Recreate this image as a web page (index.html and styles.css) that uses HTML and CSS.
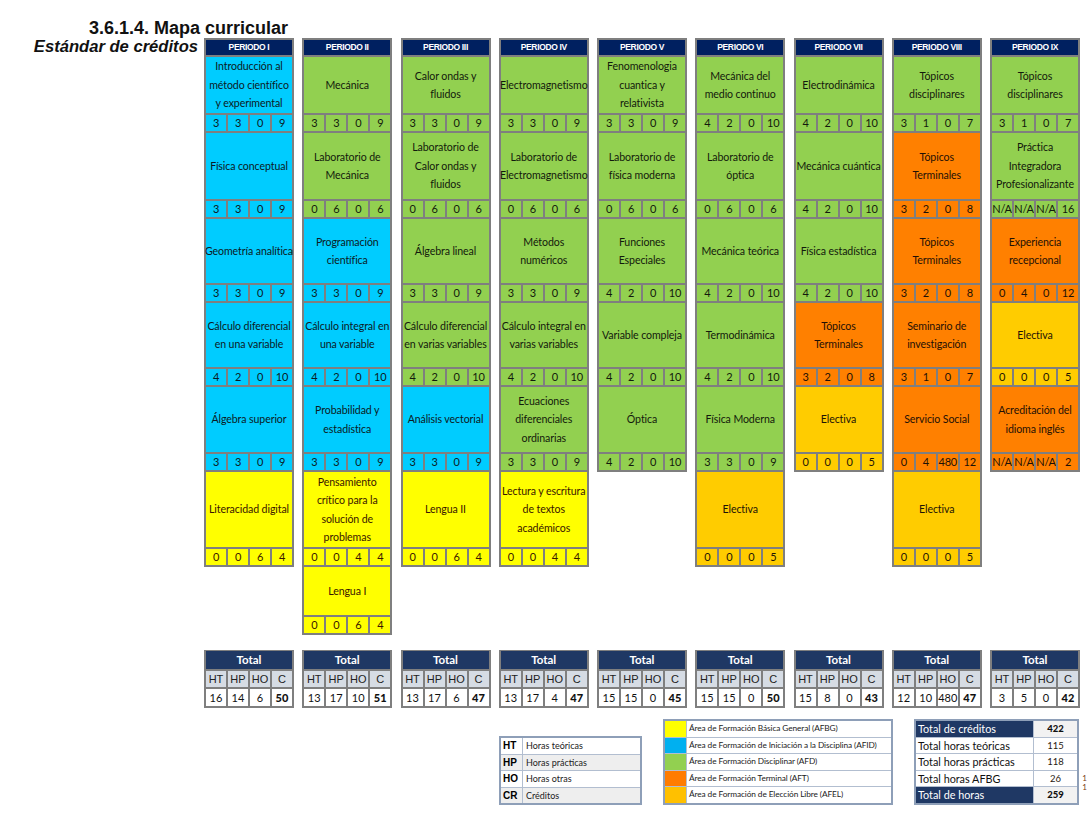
FILE: index.html
```html
<!DOCTYPE html>
<html lang="es">
<head>
<meta charset="utf-8">
<title>Mapa curricular</title>
<link rel="stylesheet" href="styles.css">
</head>
<body>
<div class="page">
  <h1 class="title">3.6.1.4. Mapa curricular</h1>
  <div class="main">
    <div class="side">Estándar de créditos</div>
    <div class="board">
      <div class="periods">
        <div class="col">
          <div class="ph">PERIODO I</div>
          <div class="c cy h1">Introducción al<br>método científico<br>y experimental</div>
          <div class="n cy"><span>3</span><span>3</span><span>0</span><span>9</span></div>
          <div class="c cy h2">Física conceptual</div>
          <div class="n cy"><span>3</span><span>3</span><span>0</span><span>9</span></div>
          <div class="c cy h3">Geometría analítica</div>
          <div class="n cy"><span>3</span><span>3</span><span>0</span><span>9</span></div>
          <div class="c cy h4">Cálculo diferencial<br>en una variable</div>
          <div class="n cy"><span>4</span><span>2</span><span>0</span><span>10</span></div>
          <div class="c cy h5">Álgebra superior</div>
          <div class="n cy"><span>3</span><span>3</span><span>0</span><span>9</span></div>
          <div class="c ye h6">Literacidad digital</div>
          <div class="n ye"><span>0</span><span>0</span><span>6</span><span>4</span></div>
        </div>
        <div class="col">
          <div class="ph">PERIODO II</div>
          <div class="c gr h1">Mecánica</div>
          <div class="n gr"><span>3</span><span>3</span><span>0</span><span>9</span></div>
          <div class="c gr h2">Laboratorio de<br>Mecánica</div>
          <div class="n gr"><span>0</span><span>6</span><span>0</span><span>6</span></div>
          <div class="c cy h3">Programación<br>científica</div>
          <div class="n cy"><span>3</span><span>3</span><span>0</span><span>9</span></div>
          <div class="c cy h4">Cálculo integral en<br>una variable</div>
          <div class="n cy"><span>4</span><span>2</span><span>0</span><span>10</span></div>
          <div class="c cy h5">Probabilidad y<br>estadística</div>
          <div class="n cy"><span>3</span><span>3</span><span>0</span><span>9</span></div>
          <div class="c ye h6">Pensamiento<br>crítico para la<br>solución de<br>problemas</div>
          <div class="n ye"><span>0</span><span>0</span><span>4</span><span>4</span></div>
          <div class="c ye h7">Lengua I</div>
          <div class="n ye"><span>0</span><span>0</span><span>6</span><span>4</span></div>
        </div>
        <div class="col">
          <div class="ph">PERIODO III</div>
          <div class="c gr h1">Calor ondas y<br>fluidos</div>
          <div class="n gr"><span>3</span><span>3</span><span>0</span><span>9</span></div>
          <div class="c gr h2">Laboratorio de<br>Calor ondas y<br>fluidos</div>
          <div class="n gr"><span>0</span><span>6</span><span>0</span><span>6</span></div>
          <div class="c gr h3">Álgebra lineal</div>
          <div class="n gr"><span>3</span><span>3</span><span>0</span><span>9</span></div>
          <div class="c gr h4">Cálculo diferencial<br>en varias variables</div>
          <div class="n gr"><span>4</span><span>2</span><span>0</span><span>10</span></div>
          <div class="c cy h5">Análisis vectorial</div>
          <div class="n cy"><span>3</span><span>3</span><span>0</span><span>9</span></div>
          <div class="c ye h6">Lengua II</div>
          <div class="n ye"><span>0</span><span>0</span><span>6</span><span>4</span></div>
        </div>
        <div class="col">
          <div class="ph">PERIODO IV</div>
          <div class="c gr h1">Electromagnetismo</div>
          <div class="n gr"><span>3</span><span>3</span><span>0</span><span>9</span></div>
          <div class="c gr h2">Laboratorio de<br>Electromagnetismo</div>
          <div class="n gr"><span>0</span><span>6</span><span>0</span><span>6</span></div>
          <div class="c gr h3">Métodos<br>numéricos</div>
          <div class="n gr"><span>3</span><span>3</span><span>0</span><span>9</span></div>
          <div class="c gr h4">Cálculo integral en<br>varias variables</div>
          <div class="n gr"><span>4</span><span>2</span><span>0</span><span>10</span></div>
          <div class="c gr h5">Ecuaciones<br>diferenciales<br>ordinarias</div>
          <div class="n gr"><span>3</span><span>3</span><span>0</span><span>9</span></div>
          <div class="c ye h6">Lectura y escritura<br>de textos<br>académicos</div>
          <div class="n ye"><span>0</span><span>0</span><span>4</span><span>4</span></div>
        </div>
        <div class="col">
          <div class="ph">PERIODO V</div>
          <div class="c gr h1">Fenomenologia<br>cuantica y<br>relativista</div>
          <div class="n gr"><span>3</span><span>3</span><span>0</span><span>9</span></div>
          <div class="c gr h2">Laboratorio de<br>física moderna</div>
          <div class="n gr"><span>0</span><span>6</span><span>0</span><span>6</span></div>
          <div class="c gr h3">Funciones<br>Especiales</div>
          <div class="n gr"><span>4</span><span>2</span><span>0</span><span>10</span></div>
          <div class="c gr h4">Variable compleja</div>
          <div class="n gr"><span>4</span><span>2</span><span>0</span><span>10</span></div>
          <div class="c gr h5">Óptica</div>
          <div class="n gr"><span>4</span><span>2</span><span>0</span><span>10</span></div>
        </div>
        <div class="col">
          <div class="ph">PERIODO VI</div>
          <div class="c gr h1">Mecánica del<br>medio continuo</div>
          <div class="n gr"><span>4</span><span>2</span><span>0</span><span>10</span></div>
          <div class="c gr h2">Laboratorio de<br>óptica</div>
          <div class="n gr"><span>0</span><span>6</span><span>0</span><span>6</span></div>
          <div class="c gr h3">Mecánica teórica</div>
          <div class="n gr"><span>4</span><span>2</span><span>0</span><span>10</span></div>
          <div class="c gr h4">Termodinámica</div>
          <div class="n gr"><span>4</span><span>2</span><span>0</span><span>10</span></div>
          <div class="c gr h5">Física Moderna</div>
          <div class="n gr"><span>3</span><span>3</span><span>0</span><span>9</span></div>
          <div class="c go h6">Electiva</div>
          <div class="n go"><span>0</span><span>0</span><span>0</span><span>5</span></div>
        </div>
        <div class="col">
          <div class="ph">PERIODO VII</div>
          <div class="c gr h1">Electrodinámica</div>
          <div class="n gr"><span>4</span><span>2</span><span>0</span><span>10</span></div>
          <div class="c gr h2">Mecánica cuántica</div>
          <div class="n gr"><span>4</span><span>2</span><span>0</span><span>10</span></div>
          <div class="c gr h3">Física estadística</div>
          <div class="n gr"><span>4</span><span>2</span><span>0</span><span>10</span></div>
          <div class="c or h4">Tópicos<br>Terminales</div>
          <div class="n or"><span>3</span><span>2</span><span>0</span><span>8</span></div>
          <div class="c go h5">Electiva</div>
          <div class="n go"><span>0</span><span>0</span><span>0</span><span>5</span></div>
        </div>
        <div class="col">
          <div class="ph">PERIODO VIII</div>
          <div class="c gr h1">Tópicos<br>disciplinares</div>
          <div class="n gr"><span>3</span><span>1</span><span>0</span><span>7</span></div>
          <div class="c or h2">Tópicos<br>Terminales</div>
          <div class="n or"><span>3</span><span>2</span><span>0</span><span>8</span></div>
          <div class="c or h3">Tópicos<br>Terminales</div>
          <div class="n or"><span>3</span><span>2</span><span>0</span><span>8</span></div>
          <div class="c or h4">Seminario de<br>investigación</div>
          <div class="n or"><span>3</span><span>1</span><span>0</span><span>7</span></div>
          <div class="c or h5">Servicio Social</div>
          <div class="n or"><span>0</span><span>4</span><span>480</span><span>12</span></div>
          <div class="c go h6">Electiva</div>
          <div class="n go"><span>0</span><span>0</span><span>0</span><span>5</span></div>
        </div>
        <div class="col">
          <div class="ph">PERIODO IX</div>
          <div class="c gr h1">Tópicos<br>disciplinares</div>
          <div class="n gr"><span>3</span><span>1</span><span>0</span><span>7</span></div>
          <div class="c gr h2">Práctica<br>Integradora<br>Profesionalizante</div>
          <div class="n gr"><span>N/A</span><span>N/A</span><span>N/A</span><span>16</span></div>
          <div class="c or h3">Experiencia<br>recepcional</div>
          <div class="n or"><span>0</span><span>4</span><span>0</span><span>12</span></div>
          <div class="c go h4">Electiva</div>
          <div class="n go"><span>0</span><span>0</span><span>0</span><span>5</span></div>
          <div class="c or h5">Acreditación del<br>idioma inglés</div>
          <div class="n or"><span>N/A</span><span>N/A</span><span>N/A</span><span>2</span></div>
        </div>
      </div>

      <div class="totals">
        <div class="tot"><div class="th">Total</div><div class="tl"><span>HT</span><span>HP</span><span>HO</span><span>C</span></div><div class="tv"><span>16</span><span>14</span><span>6</span><b>50</b></div></div>
        <div class="tot"><div class="th">Total</div><div class="tl"><span>HT</span><span>HP</span><span>HO</span><span>C</span></div><div class="tv"><span>13</span><span>17</span><span>10</span><b>51</b></div></div>
        <div class="tot"><div class="th">Total</div><div class="tl"><span>HT</span><span>HP</span><span>HO</span><span>C</span></div><div class="tv"><span>13</span><span>17</span><span>6</span><b>47</b></div></div>
        <div class="tot"><div class="th">Total</div><div class="tl"><span>HT</span><span>HP</span><span>HO</span><span>C</span></div><div class="tv"><span>13</span><span>17</span><span>4</span><b>47</b></div></div>
        <div class="tot"><div class="th">Total</div><div class="tl"><span>HT</span><span>HP</span><span>HO</span><span>C</span></div><div class="tv"><span>15</span><span>15</span><span>0</span><b>45</b></div></div>
        <div class="tot"><div class="th">Total</div><div class="tl"><span>HT</span><span>HP</span><span>HO</span><span>C</span></div><div class="tv"><span>15</span><span>15</span><span>0</span><b>50</b></div></div>
        <div class="tot"><div class="th">Total</div><div class="tl"><span>HT</span><span>HP</span><span>HO</span><span>C</span></div><div class="tv"><span>15</span><span>8</span><span>0</span><b>43</b></div></div>
        <div class="tot"><div class="th">Total</div><div class="tl"><span>HT</span><span>HP</span><span>HO</span><span>C</span></div><div class="tv"><span>12</span><span>10</span><span>480</span><b>47</b></div></div>
        <div class="tot"><div class="th">Total</div><div class="tl"><span>HT</span><span>HP</span><span>HO</span><span>C</span></div><div class="tv"><span>3</span><span>5</span><span>0</span><b>42</b></div></div>
      </div>
    </div>
  </div>

  <div class="legends">
    <div class="leg leg1">
      <div class="lr"><b>HT</b><span>Horas teóricas</span></div>
      <div class="lr alt"><b>HP</b><span>Horas prácticas</span></div>
      <div class="lr"><b>HO</b><span>Horas otras</span></div>
      <div class="lr alt"><b>CR</b><span>Créditos</span></div>
    </div>
    <div class="leg leg2">
      <div class="lr"><i class="s-ye"></i><span>Área de Formación Básica General (AFBG)</span></div>
      <div class="lr"><i class="s-cy"></i><span>Área de Formación de Iniciación a la Disciplina (AFID)</span></div>
      <div class="lr"><i class="s-gr"></i><span>Área de Formación Disciplinar (AFD)</span></div>
      <div class="lr"><i class="s-or"></i><span>Área de Formación Terminal (AFT)</span></div>
      <div class="lr"><i class="s-go"></i><span>Área de Formación de Elección Libre (AFEL)</span></div>
    </div>
    <div class="leg sum">
      <div class="lr dark"><span>Total de créditos</span><b>422</b></div>
      <div class="lr"><span>Total horas teóricas</span><em>115</em></div>
      <div class="lr"><span>Total horas prácticas</span><em>118</em></div>
      <div class="lr"><span>Total horas AFBG</span><em>26</em></div>
      <div class="lr dark"><span>Total de horas</span><b>259</b></div>
    </div>
    <div class="edge">1<br>1</div>
  </div>
</div>
</body>
</html>
```

FILE: styles.css
```css
:root {
  --gill: "Lato", "Liberation Sans", Arial, sans-serif;
  --grid: #7f7f7f;
  --navy: #002060;
  --navy2: #1f3864;
  --lborder: #8e9fb8;
  --lline: #b2bed0;
}

html, body {
  margin: 0;
  padding: 0;
  background: #ffffff;
  overflow: hidden;
}

body {
  font-family: "Liberation Sans", Arial, sans-serif;
  color: #111;
}

.page {
  width: 1088px;
}

.title {
  margin: 0;
  padding-top: 18px;
  width: 288px;
  height: 20px;
  text-align: right;
  font: bold 18px/20px "Liberation Sans", Arial, sans-serif;
  color: #111;
  white-space: nowrap;
}

.main {
  display: flex;
}

.side {
  width: 198px;
  margin-right: 6px;
  text-align: right;
  font: italic bold 16.6px/18px "Liberation Sans", Arial, sans-serif;
  color: #111;
  white-space: nowrap;
}

.board {
  width: 876px;
}

.periods,
.totals {
  display: grid;
  grid-template-columns: repeat(9, 90px);
  column-gap: 8.25px;
  align-items: start;
}

.col {
  background: var(--grid);
  padding: 2px;
  display: flex;
  flex-direction: column;
  gap: 2px;
}

.ph {
  height: 15px;
  background: var(--navy);
  color: #fff;
  font: bold 8.5px/15px "Liberation Sans", Arial, sans-serif;
  letter-spacing: -0.35px;
  text-align: center;
  white-space: nowrap;
}

.cy { --bg: #00ccff; --fg: #0c1a24; }
.gr { --bg: #92d050; --fg: #121a0c; }
.ye { --bg: #ffff00; --fg: #3a1600; }
.or { --bg: #ff8000; --fg: #1e1006; }
.go { --bg: #ffcc00; --fg: #1e1406; }

.c {
  display: flex;
  align-items: center;
  justify-content: center;
  text-align: center;
  background: var(--bg);
  color: var(--fg);
  font: 10.6px/18.5px var(--gill);
  letter-spacing: -0.1px;
  white-space: nowrap;
}

.h1 { height: 56px; }
.h2 { height: 66px; }
.h3 { height: 64px; }
.h4 { height: 64px; }
.h5 { height: 65px; }
.h6 { height: 75px; }
.h7 { height: 48px; }

.n {
  display: grid;
  grid-template-columns: repeat(4, 1fr);
  gap: 2px;
  height: 16px;
}

.n span {
  background: var(--bg);
  color: var(--fg);
  text-align: center;
  font: 11px/16px var(--gill);
  letter-spacing: -0.2px;
  white-space: nowrap;
  overflow: hidden;
}

.totals {
  margin-top: 15px;
}

.tot {
  background: var(--grid);
  padding: 1px 2px 2px;
  display: flex;
  flex-direction: column;
  gap: 2px;
}

.th {
  height: 18px;
  background: var(--navy2);
  color: #fff;
  text-align: center;
  font: bold 11.5px/18px var(--gill);
}

.tl,
.tv {
  display: grid;
  grid-template-columns: repeat(4, 1fr);
  gap: 2px;
}

.tl span {
  background: #d6dce4;
  height: 16px;
  text-align: center;
  font: 11px/16px "Liberation Sans", Arial, sans-serif;
  color: #222;
}

.tv span,
.tv b {
  background: #fff;
  height: 17px;
  text-align: center;
  font: 11px/17px var(--gill);
  color: #111;
}

.tv b {
  font-weight: 900;
}

.legends {
  display: flex;
  align-items: flex-start;
  gap: 21px;
  margin-left: 499px;
  margin-top: 11px;
}

.leg {
  box-sizing: border-box;
  display: grid;
  gap: 1px;
  background: var(--lline);
  border: 2px solid var(--lborder);
}

.lr {
  display: grid;
  gap: 1px;
}

.lr > * {
  background: #fff;
  font: 8.3px/15.6px var(--gill);
  font-style: normal;
  color: #222;
  white-space: nowrap;
  overflow: hidden;
  padding-left: 2px;
}

.leg1 {
  width: 143px;
  height: 69px;
  margin-top: 17px;
  grid-auto-rows: 1fr;
}

.leg1 .lr {
  grid-template-columns: 21px 1fr;
}

.leg1 .lr > b {
  font: bold 10px/15.5px "Liberation Sans", Arial, sans-serif;
  color: #000;
  padding-left: 2px;
}

.leg1 .lr > span {
  line-height: 15.5px;
  font-size: 9px;
  padding-left: 3px;
}

.leg1 .lr.alt > * {
  background: #eeeeee;
}

.leg2 {
  width: 230px;
  height: 86px;
  grid-auto-rows: 1fr;
}

.leg2 .lr {
  grid-template-columns: 21px 1fr;
}

.leg2 .lr > span {
  letter-spacing: -0.1px;
}

.leg2 .lr > i {
  padding: 0;
}

.s-ye { background: #ffff00 !important; }
.s-cy { background: #00b0f0 !important; }
.s-gr { background: #92d050 !important; }
.s-or { background: #ff7c00 !important; }
.s-go { background: #ffc000 !important; }

.sum {
  width: 165px;
  height: 86px;
  grid-auto-rows: 1fr;
}

.sum .lr {
  grid-template-columns: 117px 1fr;
}

.sum .lr > span {
  font-size: 10.8px;
  color: #111;
}

.sum .lr > em,
.sum .lr > b {
  text-align: center;
  padding-left: 0;
  font-size: 9.5px;
  color: #2a1a10;
}

.sum .lr > b {
  background: #f2f2f2;
  font-weight: 900;
  color: #111;
}

.sum .lr.dark > span {
  background: var(--navy2);
  color: #fff;
}

.edge {
  width: 6px;
  margin-left: -19px;
  margin-top: 55px;
  font: 8px/9px var(--gill);
  color: #7a3a10;
  text-align: right;
}
```
